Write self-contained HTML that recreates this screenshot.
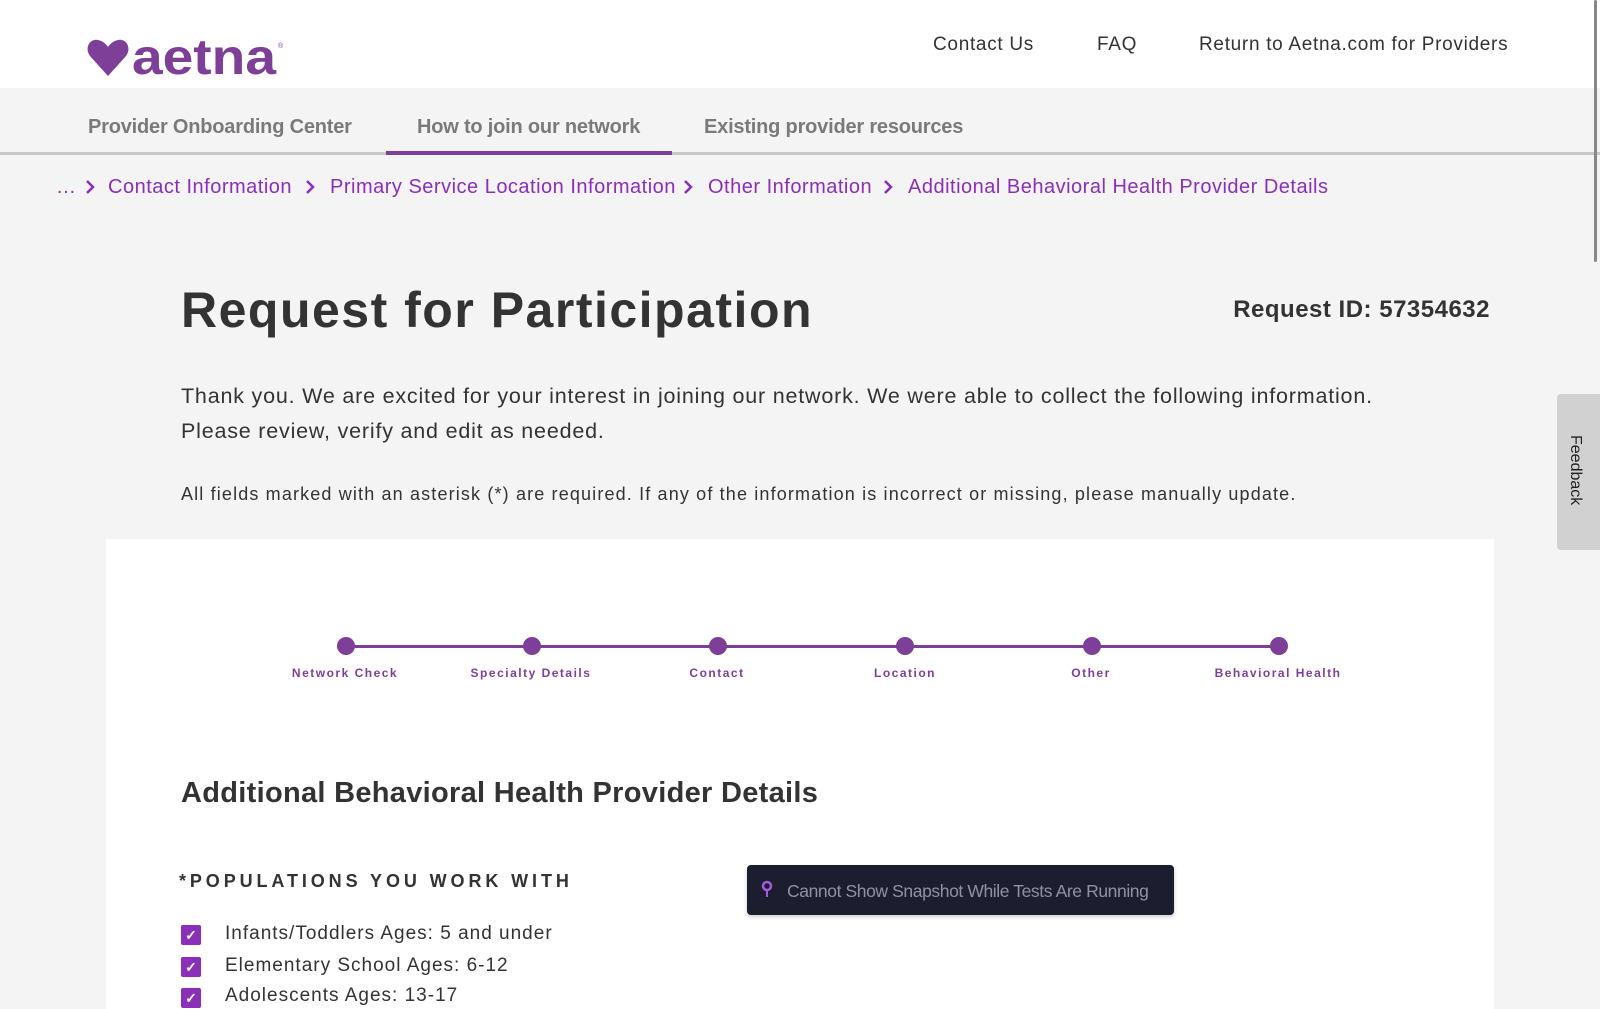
<!DOCTYPE html>
<html><head><meta charset="utf-8"><style>
*{margin:0;padding:0;box-sizing:border-box}
body{width:1600px;height:1000px;overflow:hidden;background:#f4f4f4;font-family:"Liberation Sans",sans-serif;color:#333;position:relative}
.abs{position:absolute;white-space:nowrap}
.hdr{position:absolute;left:0;top:0;width:1600px;height:88px;background:#fff}
.tabbar{position:absolute;left:0;top:88px;width:1600px;height:67px;background:#f4f4f4;border-bottom:3px solid #c8c8c8}
.tab{position:absolute;top:28px;font-size:20px;color:#7a7a7a;font-weight:bold;letter-spacing:-0.2px}
.bc{position:absolute;white-space:nowrap;font-size:20px;color:#8c2fb8;top:176px;letter-spacing:0.5px}
.dot{position:absolute;width:18px;height:18px;border-radius:50%;background:#7d3f98;top:637px}
.lbl{position:absolute;top:666px;font-size:12px;font-weight:bold;color:#7d3f98;letter-spacing:1.5px;transform:translateX(-50%);white-space:nowrap}
.cb{position:absolute;left:181px;width:20px;height:20px;background:#8c2fb8;border-radius:2px;color:#fff;font-size:14px;text-align:center;line-height:20px;font-weight:bold}
.ct{position:absolute;left:225px;font-size:19px;color:#333;letter-spacing:1px;white-space:nowrap}
.nav{position:absolute;top:34px;font-size:19px;color:#333;letter-spacing:0.7px;white-space:nowrap}
</style></head><body>
<div class="hdr"></div>
<svg class="abs" style="left:86px;top:36px" width="204" height="44" viewBox="0 0 204 44">
<path d="M22 40 L4 20 C-2 12 4 2 12 4 C17 5 20 8 22 11 C24 8 27 5 32 4 C40 2 46 12 40 20 Z" fill="#7d3f98"/>
<text x="46" y="38" font-family="Liberation Sans" font-weight="bold" font-size="50" fill="#7d3f98" textLength="144" lengthAdjust="spacingAndGlyphs">aetna</text>
<text x="192" y="12" font-size="7" fill="#7d3f98">®</text>
</svg>
<div class="nav" style="left:933px">Contact Us</div>
<div class="nav" style="left:1097px">FAQ</div>
<div class="nav" style="left:1199px">Return to Aetna.com for Providers</div>
<div class="tabbar">
<div class="tab" style="left:88px">Provider Onboarding Center</div>
<div class="tab" style="left:417px">How to join our network</div>
<div class="tab" style="left:704px">Existing provider resources</div>
<div style="position:absolute;left:386px;top:63px;width:286px;height:4px;background:#7d3f98"></div>
</div>
<div class="bc" style="left:56px">…</div>
<svg class="abs" style="left:84px;top:178px" width="12" height="18"><path d="M3 3 L9 9 L3 15" fill="none" stroke="#8c2fb8" stroke-width="2.5"/></svg>
<div class="bc" style="left:108px">Contact Information</div>
<svg class="abs" style="left:304px;top:178px" width="12" height="18"><path d="M3 3 L9 9 L3 15" fill="none" stroke="#8c2fb8" stroke-width="2.5"/></svg>
<div class="bc" style="left:330px">Primary Service Location Information</div>
<svg class="abs" style="left:682px;top:178px" width="12" height="18"><path d="M3 3 L9 9 L3 15" fill="none" stroke="#8c2fb8" stroke-width="2.5"/></svg>
<div class="bc" style="left:708px">Other Information</div>
<svg class="abs" style="left:882px;top:178px" width="12" height="18"><path d="M3 3 L9 9 L3 15" fill="none" stroke="#8c2fb8" stroke-width="2.5"/></svg>
<div class="bc" style="left:908px">Additional Behavioral Health Provider Details</div>
<div class="abs" style="left:181px;top:281px;font-size:50px;font-weight:bold;color:#333;letter-spacing:1.5px">Request for Participation</div>
<div class="abs" style="right:110px;top:296px;font-size:24px;font-weight:bold;color:#333;letter-spacing:0.5px">Request ID: 57354632</div>
<div class="abs" style="left:181px;top:379px;font-size:21.5px;line-height:35px;color:#333;letter-spacing:0.8px">Thank you. We are excited for your interest in joining our network. We were able to collect the following information.<br>Please review, verify and edit as needed.</div>
<div class="abs" style="left:181px;top:484px;font-size:18px;color:#333;letter-spacing:1.15px">All fields marked with an asterisk (*) are required. If any of the information is incorrect or missing, please manually update.</div>
<div style="position:absolute;left:106px;top:539px;width:1388px;height:470px;background:#fff"></div>
<div style="position:absolute;left:346px;top:645px;width:933px;height:3px;background:#7d3f98"></div>
<div class="dot" style="left:337px"></div><div class="dot" style="left:523px"></div><div class="dot" style="left:709px"></div><div class="dot" style="left:896px"></div><div class="dot" style="left:1083px"></div><div class="dot" style="left:1270px"></div>
<div class="lbl" style="left:345px">Network Check</div>
<div class="lbl" style="left:531px">Specialty Details</div>
<div class="lbl" style="left:717px">Contact</div>
<div class="lbl" style="left:905px">Location</div>
<div class="lbl" style="left:1091px">Other</div>
<div class="lbl" style="left:1278px">Behavioral Health</div>
<div class="abs" style="left:181px;top:777px;font-size:29px;font-weight:bold;color:#333;letter-spacing:0.3px">Additional Behavioral Health Provider Details</div>
<div class="abs" style="left:179px;top:871px;font-size:18px;font-weight:bold;color:#333;letter-spacing:3.9px">*POPULATIONS YOU WORK WITH</div>
<div class="cb" style="top:925px">✓</div><div class="ct" style="top:923px">Infants/Toddlers Ages: 5 and under</div>
<div class="cb" style="top:957px">✓</div><div class="ct" style="top:955px">Elementary School Ages: 6-12</div>
<div class="cb" style="top:988px">✓</div><div class="ct" style="top:985px">Adolescents Ages: 13-17</div>
<div class="abs" style="left:747px;top:865px;width:427px;height:50px;background:#1c1e2f;border-radius:4px;box-shadow:0 2px 4px rgba(0,0,0,.2)"></div>
<svg class="abs" style="left:761px;top:880px" width="12" height="20"><circle cx="6" cy="6" r="4" fill="none" stroke="#a35be0" stroke-width="2.5"/><line x1="6" y1="10" x2="6" y2="17" stroke="#a35be0" stroke-width="2"/></svg>
<div class="abs" style="left:787px;top:881px;font-size:17.5px;color:#8f91a8;letter-spacing:-0.4px">Cannot Show Snapshot While Tests Are Running</div>
<div class="abs" style="left:1557px;top:394px;width:45px;height:156px;background:#d1d1d1;border-radius:4px 0 0 4px"></div>
<div class="abs" style="left:1566px;top:435px;font-size:16px;color:#222;writing-mode:vertical-rl">Feedback</div>
<div class="abs" style="left:1594px;top:0;width:3px;height:262px;background:#888;border-radius:2px"></div>
</body></html>
